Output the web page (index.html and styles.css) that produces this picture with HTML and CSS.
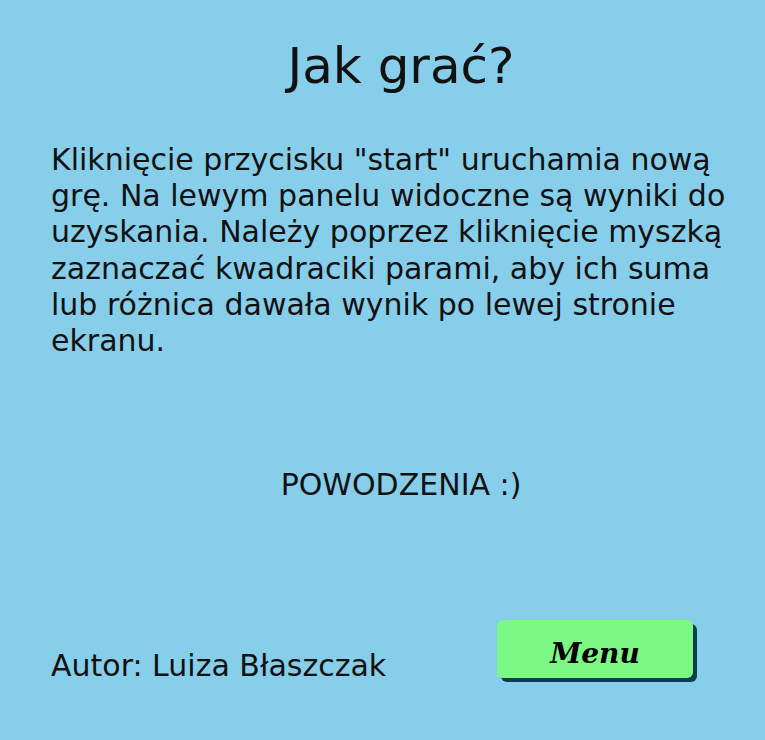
FILE: index.html
```html
<!DOCTYPE html>
<html lang="pl">
<head>
<meta charset="utf-8">
<title>Jak grać?</title>
<link rel="stylesheet" href="styles.css">
</head>
<body>
<main class="page">
  <h1 class="title">Jak grać?</h1>
  <p class="desc">Kliknięcie przycisku "start" uruchamia nową grę. Na lewym panelu widoczne są wyniki do uzyskania. Należy poprzez kliknięcie myszką zaznaczać kwadraciki parami, aby ich suma lub różnica dawała wynik po lewej stronie ekranu.</p>
  <p class="luck">POWODZENIA :)</p>
  <div class="footer">
    <span class="author">Autor: Luiza Błaszczak</span>
    <button class="menu-btn">Menu</button>
  </div>
</main>
</body>
</html>
```
FILE: styles.css
```css
html, body {
  margin: 0;
  padding: 0;
  background: #87ceeb;
  height: 100%;
}
.page {
  font-family: "DejaVu Sans", sans-serif;
  color: #111;
  padding: 0 14px 0 51px;
  display: flex;
  flex-direction: column;
}
.title {
  margin: 36px 0 0;
  font-weight: normal;
  font-size: 50px;
  text-align: center;
  line-height: 60px;
}
.desc {
  margin: 46px 0 0;
  font-size: 30px;
  line-height: 36.2px;
}
.luck {
  margin: 108px 0 0;
  font-size: 30px;
  text-align: center;
  line-height: 36px;
}
.footer {
  margin-top: 111px;
  display: flex;
  align-items: center;
  justify-content: space-between;
  padding-right: 58px;
}
.author {
  font-size: 30px;
  line-height: 36px;
  margin-top: 34px;
}
.menu-btn {
  width: 196px;
  height: 58px;
  background: #7cf985;
  border: none;
  border-radius: 6px;
  box-shadow: 4px 4px 0 #0e3e4e;
  font-family: "DejaVu Serif", serif;
  font-weight: bold;
  font-style: italic;
  font-size: 28px;
  color: #000;
  padding: 8px 0 0;
}
```
